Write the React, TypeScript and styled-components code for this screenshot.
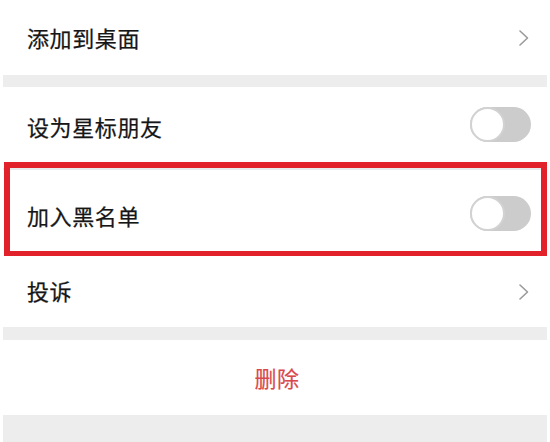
import styled, { createGlobalStyle } from "styled-components";

const GlobalStyle = createGlobalStyle`
  html, body {
    margin: 0;
    padding: 0;
    background: #ffffff;
  }
  body {
    font-family: "Noto Sans CJK SC", "Noto Sans", sans-serif;
    -webkit-font-smoothing: antialiased;
  }
`;

const Page = styled.div`
  width: 550px;
  height: 442px;
  overflow: hidden;
  padding: 0 3px;
  box-sizing: border-box;
  background: #ffffff;
  display: flex;
  flex-direction: column;
`;

const Gap = styled.div<{ $h: number }>`
  height: ${p => p.$h}px;
  flex: none;
  background: #ededed;
`;

const Row = styled.div<{ $h: number; $divider?: boolean }>`
  position: relative;
  flex: none;
  height: ${p => p.$h}px;
  display: flex;
  align-items: center;
  justify-content: space-between;
  padding: 0 16px 0 24px;
  background: #ffffff;
  box-sizing: border-box;
  border-bottom: ${p => (p.$divider ? "2px solid #e9ecec" : "none")};
`;

const Label = styled.span<{ $dy?: number }>`
  font-size: 22px;
  letter-spacing: 0.6px;
  color: #161616;
  line-height: 1;
  -webkit-text-stroke: 0.25px #161616;
  transform: translateY(${p => p.$dy ?? 0}px);
`;

const DangerRow = styled.div<{ $h: number }>`
  flex: none;
  height: ${p => p.$h}px;
  display: flex;
  align-items: center;
  justify-content: center;
  background: #ffffff;
`;

const DangerLabel = styled.span`
  font-size: 22px;
  letter-spacing: 0.6px;
  color: #d9484c;
  line-height: 1;
  padding-left: 4px;
  -webkit-text-stroke: 0.2px #d9484c;
  transform: translateY(-1px);
`;

const Chevron = styled.svg`
  width: 12px;
  height: 18px;
  margin-right: 1px;
  flex: none;
`;

const Track = styled.div<{ $dy?: number }>`
  width: 61px;
  height: 35px;
  border-radius: 18px;
  background: #cccccc;
  display: flex;
  align-items: center;
  flex: none;
  transform: translateY(${p => p.$dy ?? 0}px);
`;

const Knob = styled.div`
  width: 31px;
  height: 31px;
  border-radius: 50%;
  background: #ffffff;
  border: 2px solid #d2d2d2;
  box-sizing: content-box;
`;

const Highlight = styled.div`
  position: absolute;
  left: 1px;
  right: 0px;
  top: -8px;
  bottom: -1px;
  border: 6px solid #e2222a;
  pointer-events: none;
`;

function Arrow() {
  return (
    <Chevron viewBox="0 0 12 18">
      <path d="M2 2 L9.5 9 L2 16" fill="none" stroke="#9a9a9a" strokeWidth="1.6" strokeLinecap="round" strokeLinejoin="round" />
    </Chevron>
  );
}

function Toggle({ dy }: { dy?: number }) {
  return (
    <Track $dy={dy}>
      <Knob />
    </Track>
  );
}

export default function App() {
  return (
    <>
      <GlobalStyle />
      <Page>
        <Row $h={75}>
          <Label $dy={-1}>添加到桌面</Label>
          <Arrow />
        </Row>
        <Gap $h={12} />
        <Row $h={83} $divider>
          <Label $dy={-2}>设为星标朋友</Label>
          <Toggle dy={-3} />
        </Row>
        <Row $h={86}>
          <Label $dy={2}>加入黑名单</Label>
          <Toggle />
          <Highlight />
        </Row>
        <Row $h={71}>
          <Label $dy={-2}>投诉</Label>
          <Arrow />
        </Row>
        <Gap $h={13} />
        <DangerRow $h={75}>
          <DangerLabel>删除</DangerLabel>
        </DangerRow>
        <Gap $h={27} />
      </Page>
    </>
  );
}
